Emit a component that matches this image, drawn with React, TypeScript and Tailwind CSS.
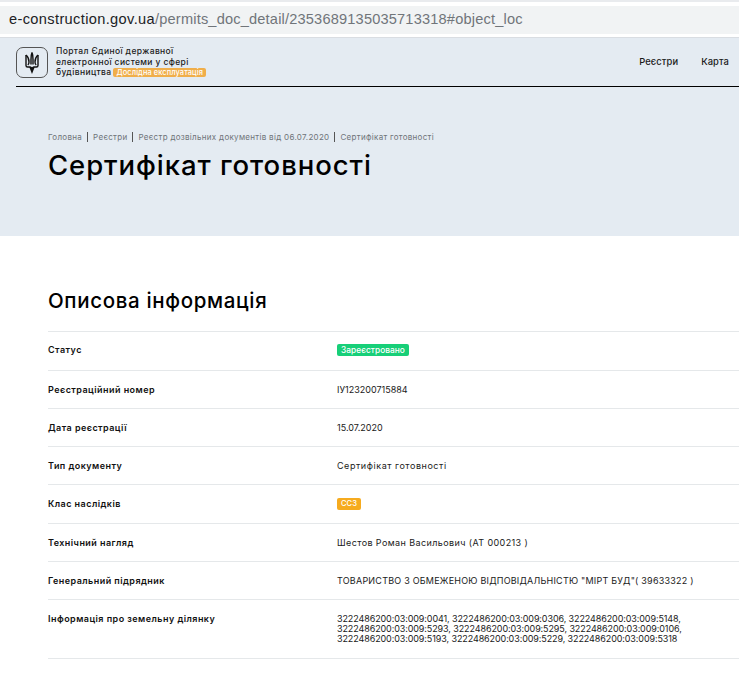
const rows: { label: string; value: React.ReactNode; h: string; vc: string; pt: string }[] = [
  { label: "Статус", h: "h-[39px]", pt: "pt-[13px]", vc: "", value: <span className="relative top-[-1px] inline-block rounded-[2px] bg-[#17cf78] px-[4px] text-[8.3px] leading-[12px] font-medium tracking-[0.06px] text-white">Зареєстровано</span> },
  { label: "Реєстраційний номер", h: "h-[38px]", pt: "pt-[14px]", vc: "", value: "ІУ123200715884" },
  { label: "Дата реєстрації", h: "h-[38px]", pt: "pt-[14px]", vc: "", value: "15.07.2020" },
  { label: "Тип документу", h: "h-[38px]", pt: "pt-[14px]", vc: "tracking-[0.55px]", value: "Сертифікат готовності" },
  { label: "Клас наслідків", h: "h-[39px]", pt: "pt-[14px]", vc: "", value: <span className="relative top-[-1px] inline-block rounded-[2px] bg-[#f6ab1f] px-[4px] text-[7.6px] leading-[12px] font-medium text-white">СС3</span> },
  { label: "Технічний нагляд", h: "h-[38px]", pt: "pt-[14px]", vc: "tracking-[0.4px]", value: "Шестов Роман Васильович (АТ 000213 )" },
  { label: "Генеральний підрядник", h: "h-[38px]", pt: "pt-[14px]", vc: "tracking-[0.22px]", value: 'ТОВАРИСТВО З ОБМЕЖЕНОЮ ВІДПОВІДАЛЬНІСТЮ "МІРТ БУД"( 39633322 )' },
  {
    label: "Інформація про земельну ділянку",
    h: "h-[59px]",
    pt: "pt-[14px]",
    vc: "tracking-[-0.1px]",
    value: (
      <>
        3222486200:03:009:0041, 3222486200:03:009:0306, 3222486200:03:009:5148,
        <br />
        3222486200:03:009:5293, 3222486200:03:009:5295, 3222486200:03:009:0106,
        <br />
        3222486200:03:009:5193, 3222486200:03:009:5229, 3222486200:03:009:5318
      </>
    ),
  },
];

function Trident() {
  return (
    <svg width="14" height="23" viewBox="0 0 14 22" fill="none" stroke="#111" strokeWidth="1.4">
      <path d="M7 1c-1 2-1 4-1 7v5M7 1c1 2 1 4 1 7v5" />
      <path d="M1 3.500v10.500c0 1 .6 1.500 1.500 1.500H5c.8 0 1.400.6 2 1.500.6-.9 1.200-1.500 2-1.500h2.500c.9 0 1.500-.5 1.500-1.500V3.500" />
      <path d="M1 3.500c1.800 1.500 3 4 3 7 0 1.500-.5 2.500-1.200 3M13 3.500c-1.800 1.500-3 4-3 7 0 1.500.5 2.500 1.200 3" />
      <path d="M5 15.500l2 5 2-5M7 16.500v4" />
    </svg>
  );
}

export default function App() {
  const crumbs = ["Головна", "Реєстри", "Реєстр дозвільних документів від 06.07.2020", "Сертифікат готовності"];
  return (
    <div className="h-[675px] w-[739px] overflow-hidden bg-white font-['Inter','Noto_Sans',sans-serif] text-black">
      <div className="h-[2px] bg-[#e9ebee]" />
      <div className="px-0 pt-[4px] pb-[3px]">
        <div className="flex h-[28px] items-center bg-[#f1f3f4] pl-[9px] font-['Liberation_Sans','Inter',sans-serif] text-[14.6px] tracking-[0.18px] whitespace-nowrap text-[#70757a]">
          <span className="tracking-[0.36px] text-[#202124]">e-construction.gov.ua</span>/permits_doc_detail/2353689135035713318#object_loc
        </div>
      </div>
      <div className="h-[199px] border-t border-[#d9dde2] bg-[#e4ebf2]">
        <div className="ml-[16px] flex h-[49px] items-center justify-between border-b border-black pr-[10px]">
          <div className="flex items-center gap-[8px]">
            <div className="flex h-[31px] w-[32px] items-center justify-center rounded-[7px] border border-[#555]">
              <Trident />
            </div>
            <div className="text-[8.5px] leading-[10.4px] font-medium tracking-[0.38px] text-[#1c1c1c]">
              <div>Портал Єдиної державної</div>
              <div>електронної системи у сфері</div>
              <div className="flex items-center gap-[1.500px]">
                будівництва
                <span className="rounded-[2px] bg-[#f0ae4a] px-[3.500px] text-[7.4px] leading-[9.500px] tracking-[0.1px] text-white">Дослідна експлуатація</span>
              </div>
            </div>
          </div>
          <div className="flex gap-[23px] pt-[1px] text-[9.4px] font-medium tracking-[0.1px] text-[#1a1a1a]">
            <span>Реєстри</span>
            <span>Карта</span>
          </div>
        </div>
        <div className="pl-[48px]">
          <div className="mt-[44px] flex items-center text-[8px] leading-[12px] tracking-[0.3px] whitespace-nowrap text-[#6f7479]">
            {crumbs.map((c, i) => (
              <span key={c} className="flex items-center">
                {i > 0 && <span className="mx-[5px] h-[10px] w-px bg-[#555]" />}
                {c}
              </span>
            ))}
          </div>
          <h1 className="mt-[6px] text-[27.5px] leading-[32px] font-medium tracking-[0.93px] whitespace-nowrap">Сертифікат готовності</h1>
        </div>
      </div>
      <section className="pl-[48px]">
        <h2 className="mt-[52px] mb-[17px] text-[20.5px] leading-[26px] font-medium tracking-[0.65px]">Описова інформація</h2>
        <div className="border-t border-[#e5e8ea]">
          {rows.map((r) => (
            <div key={r.label} className={`flex border-b border-[#e5e8ea] text-[9px] leading-[10px] ${r.pt} ${r.h}`}>
              <div className="w-[289px] shrink-0 font-semibold tracking-[0.45px] text-[#111]">{r.label}</div>
              <div className={`whitespace-nowrap text-[#1a1a1a] ${r.vc}`}>{r.value}</div>
            </div>
          ))}
        </div>
      </section>
    </div>
  );
}
